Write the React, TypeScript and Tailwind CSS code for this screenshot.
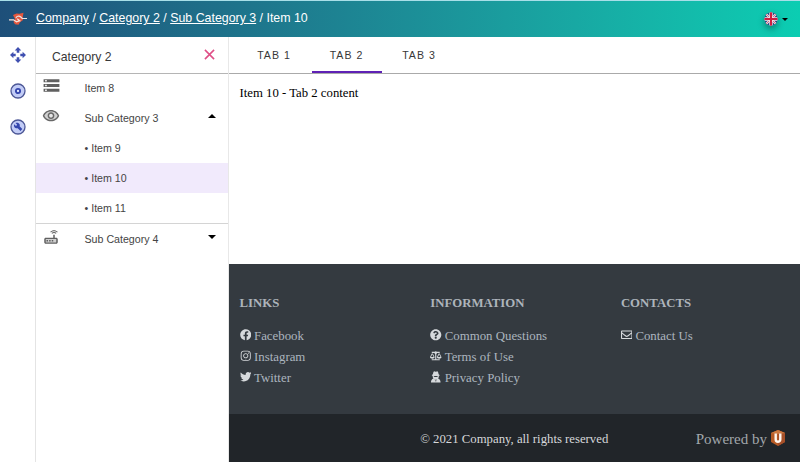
import React from "react";
import { FaBalanceScale, FaFacebook, FaInstagram, FaQuestionCircle, FaRegEnvelope, FaTwitter } from "react-icons/fa";

function Logo() {
  return (
    <svg viewBox="0 0 20 14" className="h-[14px] w-[20px] shrink-0">
      <path d="M5 3 8.500 1.500l3 .3 4-1-.8 4.200.3 3-3 2.200-1.500 2.600L7 12.300 5.500 10 7 7z" fill="#e4573d" />
      <path d="M1 7.800h4.500l3 2 3.200-1.100-2.500-2" fill="none" stroke="#f7e3dd" strokeWidth="1.300" />
      <path d="M8 6.300c0-2 3-3 4.800-1.300l1.400 1.500H19" fill="none" stroke="#e6e4e6" strokeWidth="1.200" />
    </svg>
  );
}

function Flag() {
  return (
    <svg viewBox="0 0 14 14" className="size-[14px] rounded-full shadow-[0_3px_6px_rgba(0,0,0,0.35)]">
      <defs>
        <clipPath id="flag">
          <circle cx="7" cy="7" r="6.700" />
        </clipPath>
      </defs>
      <g clipPath="url(#flag)">
        <path d="M0 0h14v14H0z" fill="#31407f" />
        <path d="m0 0 14 14M14 0 0 14" stroke="#ecdfe8" strokeWidth="2.200" />
        <path d="m0 0 14 14M14 0 0 14" stroke="#d65368" strokeWidth=".8" />
        <path d="M7 0v14M0 7h14" stroke="#f3e3e8" strokeWidth="3.400" />
        <path d="M7 0v14M0 7h14" stroke="#cf1c3f" strokeWidth="2" />
      </g>
    </svg>
  );
}

function MoveIcon() {
  return (
    <svg viewBox="0 0 18 18" className="size-[18px]" fill="#3f4fb0">
      <path d="m9 1 3.300 3.400h-2v2.300H7.700V4.400h-2zM9 17l-3.300-3.400h2v-2.300h2.600v2.300h2zM1 9l3.400-3.300v2h2.300v2.600H4.400v2zM17 9l-3.400 3.300v-2h-2.300V7.700h2.300v-2z" />
    </svg>
  );
}

function TargetIcon() {
  return (
    <svg viewBox="0 0 18 18" className="size-[18px]">
      <circle cx="9" cy="9" r="7" fill="#c2ccf6" stroke="#4c5796" strokeWidth="1.300" />
      <circle cx="9" cy="9" r="2.100" fill="#e5eaff" stroke="#3445ad" strokeWidth="1.900" />
    </svg>
  );
}

function WrenchIcon() {
  return (
    <svg viewBox="0 0 18 18" className="size-[18px]">
      <circle cx="9" cy="9" r="7" fill="#c2ccf6" stroke="#4c5796" strokeWidth="1.300" />
      <path d="M5.200 6.200 7 8l1.200-1.200L6.500 5c1.700-.8 3.500-.2 4.100 1.300.3.700.3 1.400 0 2l2.700 2.800-1.800 1.800-2.800-2.700c-2.100.7-4.500-1.400-3.500-4z" fill="#3445ad" />
    </svg>
  );
}

function StorageIcon() {
  return (
    <svg viewBox="0 0 24 24" className="size-[19px]" fill="#606060">
      <path d="M2 20h20v-4H2v4zm2-3h2v2H4v-2zM2 4v4h20V4H2zm4 3H4V5h2v2zm-4 7h20v-4H2v4zm2-3h2v2H4v-2z" />
    </svg>
  );
}

function EyeIcon() {
  return (
    <svg viewBox="0 0 24 24" className="size-[18px]" fill="#686868">
      <path d="M12 6c-3.790 0-7.170 2.130-8.820 5.500C4.830 14.870 8.210 17 12 17s7.170-2.130 8.820-5.500C19.170 8.130 15.790 6 12 6z" opacity=".3" />
      <circle cx="12" cy="11.500" r="3.500" fill="#e6e6e6" />
      <path d="M12 4C7 4 2.730 7.110 1 11.500 2.730 15.890 7 19 12 19s9.270-3.110 11-7.500C21.270 7.110 17 4 12 4zm0 13c-3.790 0-7.170-2.130-8.820-5.500C4.830 8.130 8.210 6 12 6s7.170 2.130 8.820 5.500C19.170 14.870 15.790 17 12 17zm0-10c-2.480 0-4.500 2.020-4.500 4.500S9.520 16 12 16s4.500-2.020 4.500-4.500S14.480 7 12 7zm0 7c-1.380 0-2.500-1.120-2.500-2.500S10.620 9 12 9s2.500 1.120 2.500 2.500S13.380 14 12 14z" />
    </svg>
  );
}

function RouterIcon() {
  return (
    <svg viewBox="0 0 24 24" className="size-[18px]" fill="#606060">
      <path d="m20.200 5.900.8-.8C19.600 3.700 17.800 3 16 3s-3.600.7-5 2.100l.8.8C13 4.800 14.500 4.200 16 4.200s3 .6 4.200 1.700zm-.9.800c-.9-.9-2.100-1.400-3.300-1.400s-2.400.5-3.300 1.400l.8.800c.7-.7 1.600-1 2.500-1s1.800.3 2.500 1l.8-.8z" />
      <path d="M4 14h16v6H4z" opacity=".3" />
      <path d="M19 13h-2V9h-2v4H5c-1.100 0-2 .9-2 2v4c0 1.100.9 2 2 2h14c1.100 0 2-.9 2-2v-4c0-1.100-.9-2-2-2zm0 6.200H5v-4.400h14v4.400zM6 16h2v2H6zm3.500 0h2v2h-2zm3.500 0h2v2h-2z" />
    </svg>
  );
}

function AgentIcon({ className = "" }: { className?: string }) {
  return (
    <svg viewBox="0 0 12 12" className={className} fill="currentColor">
      <path d="M3.500 1.200Q4.100 0 5 .4l1 .3 1-.3q.9-.4 1.500.8l.5 2.300 1 .6v.8H9.200V6q-.1 1-.8 1.700 2.600.8 2.600 4.300H1q0-3.500 2.600-4.300Q2.900 7 2.800 6V4.900H2v-.8l1-.6zM4 5.100v1l1.700.2h.6L8 6.100v-1z" fillRule="evenodd" />
      <path d="m4.800 8.300 1.200.9 1.200-.9L6.500 11h-1z" fill="#343a40" opacity=".55" />
    </svg>
  );
}

function Caret({ up = false, className = "h-1 w-2" }: { up?: boolean; className?: string }) {
  return (
    <svg viewBox="0 0 8 4" className={className}>
      <path d={up ? "M0 4h8L4 0z" : "M0 0h8L4 4z"} />
    </svg>
  );
}

function Brand() {
  return (
    <svg viewBox="0 0 16 16" className="size-4">
      <path d="M8 0 15 3v9l-7 4-7-4V3z" fill="#b75b25" />
      <path d="m8 0 7 3v9l-7 4z" fill="#a65029" />
      <path d="m1 3 7-3 7 3-7 1z" fill="#cd7940" />
      <path d="M5.700 3.500v6c0 3 4.600 3 4.600 0v-6" fill="none" stroke="#fff7ef" strokeWidth="2.400" />
    </svg>
  );
}

function MenuRow({ icon, label, caret, active }: { icon?: React.ReactNode; label: string; caret?: React.ReactNode; active?: boolean }) {
  return (
    <div className={`flex h-[30px] items-center pr-3 ${active ? "bg-[#f1eafc]" : ""}`}>
      <div className="w-[48.500px] pb-[5px] pl-[6px]">{icon}</div>
      <span className="flex-1 pt-px text-[10.650px] whitespace-pre text-[#444]">{label}</span>
      {caret}
    </div>
  );
}

type LinkItem = { icon: React.ComponentType<{ className?: string }>; label: string };

function LinkColumn({ title, links }: { title: string; links: LinkItem[] }) {
  return (
    <div className="w-[190.700px] shrink-0">
      <h2 className="mb-[14px] text-[12.800px] leading-[18px] font-bold text-[#adb4bb]">{title}</h2>
      {links.map(({ icon: Icon, label }) => (
        <a key={label} className="flex h-[21px] items-center gap-[3px] text-[12.850px] text-[#acb5bf]">
          <Icon className="mb-[3px] size-[11.500px] text-[#d6d9dc]" />
          <span className="whitespace-nowrap">{label}</span>
        </a>
      ))}
    </div>
  );
}

export default function App() {
  return (
    <div className="flex h-[462px] w-[800px] flex-col overflow-hidden bg-white font-['Liberation_Sans',Arial,sans-serif] text-[#383838]">
      <header className="flex h-[37px] shrink-0 items-center border-t border-[#a8dfe8] bg-linear-to-r from-[#1e4f79] to-[#0bcdb2] pr-[12px] pl-2 text-white">
        <Logo />
        <nav className="ml-[8px] flex-1 pb-px text-[12.380px] whitespace-nowrap">
          <a className="underline">Company</a> / <a className="underline">Category 2</a> / <a className="underline">Sub Category 3</a> / Item 10
        </nav>
        <Flag />
        <Caret className="ml-[4px] h-[3px] w-[6px] text-black" />
      </header>
      <div className="flex min-h-0 flex-1">
        <aside className="flex w-9 flex-col items-center gap-[18px] border-r border-[#e4e4e4] pt-[9px]">
          <MoveIcon />
          <TargetIcon />
          <WrenchIcon />
        </aside>
        <aside className="w-[192.500px] border-r border-[#e8e8e8]">
          <div className="flex h-[37px] items-center justify-between border-b border-[#b5b5b5] pt-[5px] pr-[13px] pl-4 text-[12.200px]">
            <span>Category 2</span>
            <svg viewBox="0 0 12 12" className="mb-[6px] size-[11px]">
              <path d="m1 1 10 10M11 1 1 11" stroke="#df4e86" strokeWidth="1.700" />
            </svg>
          </div>
          <div className="-mt-px">
            <MenuRow icon={<StorageIcon />} label="Item 8" />
            <MenuRow icon={<EyeIcon />} label="Sub Category 3" caret={<Caret up className="mb-[5px] h-1 w-2" />} />
            <MenuRow label="• Item 9" />
            <MenuRow label="• Item 10" active />
            <MenuRow label="• Item 11" />
          </div>
          <div className="border-t border-[#d4d4d4]">
            <MenuRow icon={<RouterIcon />} label="Sub Category 4" caret={<Caret className="mb-1 h-1 w-2" />} />
          </div>
        </aside>
        <main className="flex min-w-0 flex-1 flex-col font-['Liberation_Serif','Times_New_Roman',serif]">
          <div className="flex h-[37px] shrink-0 gap-[2.500px] border-b border-[#aaa] pl-[11px] font-['Liberation_Sans',Arial,sans-serif] text-[10.600px] tracking-[1px]">
            {["TAB 1", "TAB 2", "TAB 3"].map((tab) => (
              <button key={tab} className={`flex w-[70px] items-center justify-center border-b-2 pt-[3px] pr-[1px] ${tab === "TAB 2" ? "border-[#5f21b5]" : "border-transparent"}`}>
                {tab}
              </button>
            ))}
          </div>
          <div className="flex-1 px-[11px] pt-[10px] text-[12.750px] leading-[18px] text-black">Item 10 - Tab 2 content</div>
          <footer className="shrink-0">
            <div className="flex h-[150px] bg-[#343a40] pt-[30px] pl-[11px]">
              <LinkColumn title="LINKS" links={[{ icon: FaFacebook, label: "Facebook" }, { icon: FaInstagram, label: "Instagram" }, { icon: FaTwitter, label: "Twitter" }]} />
              <LinkColumn title="INFORMATION" links={[{ icon: FaQuestionCircle, label: "Common Questions" }, { icon: FaBalanceScale, label: "Terms of Use" }, { icon: AgentIcon, label: "Privacy Policy" }]} />
              <LinkColumn title="CONTACTS" links={[{ icon: FaRegEnvelope, label: "Contact Us" }]} />
            </div>
            <div className="grid h-12 grid-cols-[1fr_190px_1fr] items-center bg-[#212529] pt-[3px]">
              <span className="col-start-2 text-center text-[12.760px] whitespace-nowrap text-[#d6d8da]">© 2021 Company, all rights reserved</span>
              <span className="flex items-center justify-end gap-[3px] pr-[14px] text-[15px] text-[#a2a7ab]">
                Powered by
                <span className="mb-1"><Brand /></span>
              </span>
            </div>
          </footer>
        </main>
      </div>
    </div>
  );
}
